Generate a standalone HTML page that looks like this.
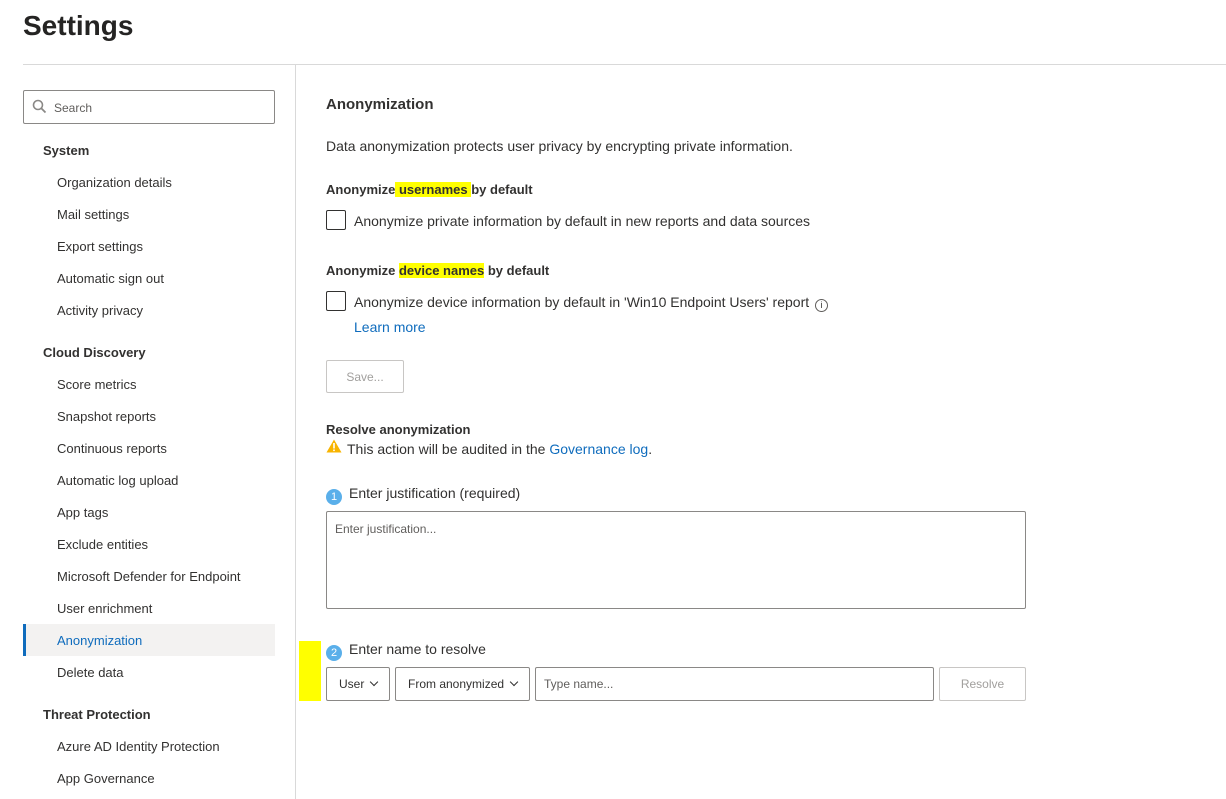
<!DOCTYPE html>
<html><head><meta charset="utf-8"><style>
*{margin:0;padding:0;box-sizing:border-box}
body{width:1226px;height:799px;background:#fff;font-family:"Liberation Sans",sans-serif;font-size:13px;color:#323130;position:relative;overflow:hidden}
.a{position:absolute;white-space:nowrap}
.t{line-height:16px}
.c{font-size:14px}
.nav{left:57px}
.sec{left:43px;font-weight:bold}
.hl{background:#ffff00}
.box{position:absolute;border:1px solid #8a8886;border-radius:2px;background:#fff}
.cb{position:absolute;width:20px;height:20px;border:1px solid #323130;border-radius:2px}
.num{display:inline-block;width:16px;height:16px;border-radius:50%;background:#5aafea;color:#fff;font-size:11px;text-align:center;line-height:16px;margin-right:7px;vertical-align:-2px}
.link{color:#0f6cbd}
.btn{position:absolute;border:1px solid #c8c6c4;border-radius:2px;color:#a19f9d;font-size:12px;text-align:center}
.chev{display:inline-block;width:6px;height:6px;border-right:1.5px solid #323130;border-bottom:1.5px solid #323130;transform:rotate(45deg);margin-left:7px;vertical-align:3px}
</style></head><body>
<div class="a" style="left:23px;top:10px;font-size:28px;font-weight:bold;color:#252423">Settings</div>
<div class="a" style="left:23px;top:64px;width:1203px;height:1px;background:#d9d9d9"></div>
<div class="a" style="left:295px;top:65px;width:1px;height:734px;background:#d9d9d9"></div>

<div class="box" style="left:23px;top:90px;width:252px;height:34px;border-color:#8a8886"></div>
<svg class="a" style="left:32px;top:99px" width="15" height="15" viewBox="0 0 15 15"><circle cx="6" cy="6" r="4.5" fill="none" stroke="#8a8886" stroke-width="1.6"/><path d="M9.5 9.5L13.5 13.5" stroke="#8a8886" stroke-width="1.8"/></svg>
<div class="a t" style="left:54px;top:100px;font-size:12px;color:#605e5c">Search</div>

<div class="a t sec" style="top:143px">System</div>
<div class="a t nav" style="top:175px">Organization details</div>
<div class="a t nav" style="top:207px">Mail settings</div>
<div class="a t nav" style="top:239px">Export settings</div>
<div class="a t nav" style="top:271px">Automatic sign out</div>
<div class="a t nav" style="top:303px">Activity privacy</div>
<div class="a t sec" style="top:345px">Cloud Discovery</div>
<div class="a t nav" style="top:377px">Score metrics</div>
<div class="a t nav" style="top:409px">Snapshot reports</div>
<div class="a t nav" style="top:441px">Continuous reports</div>
<div class="a t nav" style="top:473px">Automatic log upload</div>
<div class="a t nav" style="top:505px">App tags</div>
<div class="a t nav" style="top:537px">Exclude entities</div>
<div class="a t nav" style="top:569px">Microsoft Defender for Endpoint</div>
<div class="a t nav" style="top:601px">User enrichment</div>
<div class="a" style="left:23px;top:624px;width:252px;height:32px;background:#f3f2f1"></div>
<div class="a" style="left:23px;top:624px;width:3px;height:32px;background:#0f6cbd"></div>
<div class="a t nav" style="top:633px;color:#0f6cbd">Anonymization</div>
<div class="a t nav" style="top:665px">Delete data</div>
<div class="a t sec" style="top:707px">Threat Protection</div>
<div class="a t nav" style="top:739px">Azure AD Identity Protection</div>
<div class="a t nav" style="top:771px">App Governance</div>

<div class="a" style="left:326px;top:96px;font-size:15px;font-weight:bold;color:#323130">Anonymization</div>
<div class="a t c" style="left:326px;top:138px">Data anonymization protects user privacy by encrypting private information.</div>
<div class="a t" style="left:326px;top:182px;font-weight:bold">Anonymize<span class="hl"> usernames </span>by default</div>
<div class="cb" style="left:326px;top:210px"></div>
<div class="a t c" style="left:354px;top:213px">Anonymize private information by default in new reports and data sources</div>
<div class="a t" style="left:326px;top:263px;font-weight:bold">Anonymize <span class="hl">device names</span> by default</div>
<div class="cb" style="left:326px;top:291px"></div>
<div class="a t c" style="left:354px;top:294px">Anonymize device information by default in 'Win10 Endpoint Users' report <span style="display:inline-block;width:13px;height:13px;border:1px solid #605e5c;border-radius:50%;font-size:9px;line-height:11px;text-align:center;vertical-align:-1px;margin-left:2px">i</span></div>
<div class="a t c link" style="left:354px;top:319px">Learn more</div>
<div class="btn" style="left:326px;top:360px;width:78px;height:33px;line-height:33px">Save...</div>

<div class="a t" style="left:326px;top:422px;font-weight:bold">Resolve anonymization</div>
<svg class="a" style="left:326px;top:439px" width="16" height="14" viewBox="0 0 16 14"><path d="M8 0.5L15.5 13.5H0.5Z" fill="#f8b400"/><rect x="7.2" y="4" width="1.6" height="5.5" fill="#fff"/><rect x="7.2" y="10.5" width="1.6" height="1.6" fill="#fff"/></svg>
<div class="a t c" style="left:347px;top:441px">This action will be audited in the <span class="link">Governance log</span>.</div>
<div class="a t c" style="left:326px;top:485px"><span class="num">1</span>Enter justification (required)</div>
<div class="box" style="left:326px;top:511px;width:700px;height:98px"></div>
<div class="a t" style="left:335px;top:521px;font-size:12px;color:#605e5c">Enter justification...</div>
<div class="a" style="left:299px;top:641px;width:22px;height:60px;background:#ffff00"></div>
<div class="a t c" style="left:326px;top:641px"><span class="num">2</span>Enter name to resolve</div>
<div class="box" style="left:326px;top:667px;width:64px;height:34px;line-height:33px;padding-left:12px;font-size:12px">User<span class="chev"></span></div>
<div class="box" style="left:395px;top:667px;width:135px;height:34px;line-height:33px;padding-left:12px;font-size:12px">From anonymized<span class="chev"></span></div>
<div class="box" style="left:535px;top:667px;width:399px;height:34px;line-height:33px;padding-left:8px;font-size:12px;color:#605e5c">Type name...</div>
<div class="btn" style="left:939px;top:667px;width:87px;height:34px;line-height:33px">Resolve</div>
</body></html>
